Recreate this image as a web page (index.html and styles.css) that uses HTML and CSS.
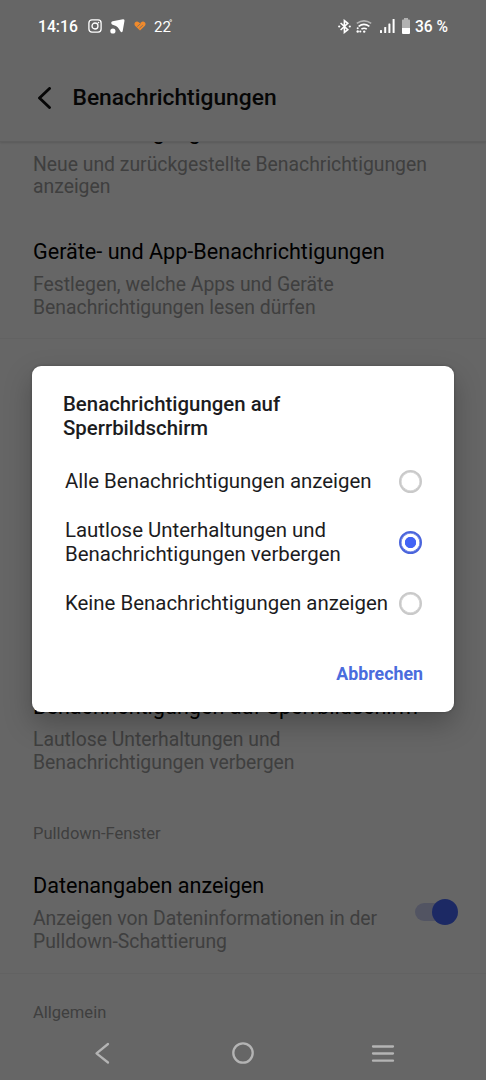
FILE: index.html
```html
<!DOCTYPE html>
<html lang="de">
<head>
<meta charset="utf-8">
<title>Benachrichtigungen</title>
<link rel="stylesheet" href="styles.css">
</head>
<body>
<div class="phone">
  <div class="screen">
    <header class="header">
      <svg class="back" width="14" height="22" viewBox="0 0 14 22"><path d="M12.500 1.500 2.500 11l10 9.500"/></svg>
      <h1 class="header-title">Benachrichtigungen</h1>
    </header>
    <main class="list">
      <section class="group group-top">
        <div class="row">
          <div class="row-title">Benachrichtigungsverlauf</div>
          <div class="row-sub">Neue und zurückgestellte Benachrichtigungen<br>anzeigen</div>
        </div>
        <div class="row">
          <div class="row-title">Geräte- und App-Benachrichtigungen</div>
          <div class="row-sub">Festlegen, welche Apps und Geräte<br>Benachrichtigungen lesen dürfen</div>
        </div>
      </section>
      <section class="group group-lock">
        <div class="row">
          <div class="row-title">Benachrichtigungen auf Sperrbildschirm</div>
          <div class="row-sub">Lautlose Unterhaltungen und<br>Benachrichtigungen verbergen</div>
        </div>
      </section>
      <section class="group group-pulldown">
        <div class="label">Pulldown-Fenster</div>
        <div class="row row-switch">
          <div>
            <div class="row-title">Datenangaben anzeigen</div>
            <div class="row-sub">Anzeigen von Dateninformationen in der<br>Pulldown-Schattierung</div>
          </div>
          <svg class="switch" width="43" height="26" viewBox="0 0 43 26"><rect class="track" y="4" width="38" height="18" rx="9"/><circle class="knob" cx="30" cy="13" r="13"/></svg>
        </div>
      </section>
      <section class="group group-general">
        <div class="label">Allgemein</div>
      </section>
    </main>
  </div>

  <div class="overlay">
    <div class="status">
      <span class="clock">14:16</span>
      <svg class="i-insta" width="14" height="14" viewBox="0 0 14 14" fill="none" stroke="#fff" stroke-width="1.300"><rect x=".9" y=".9" width="12.200" height="12.200" rx="3"/><circle cx="7" cy="7" r="3"/><circle cx="10.500" cy="3.600" r=".8" fill="#fff" stroke="none"/></svg>
      <svg class="i-send" width="15" height="15" viewBox="0 0 15 15" fill="#fff"><path d="M2.600 2.300 13 .3q1.800-.2 1.500 1.500L12.700 12q-.7 2.100-2.200.6L8.800 9.800Q7.900 7.900 6 6.900L2 5.400Q.2 3.400 2.600 2.300z"/><circle cx="2.900" cy="12" r="2.600"/></svg>
      <svg class="i-heart" width="12" height="10" viewBox="0 0 12 10"><path d="M6 9.600 1 4.800C-.9 2 2.500-.8 4.800 1.300L6 2.300l1.200-1C9.500-.8 12.900 2 11 4.800z" fill="#f08a2c"/><path d="M3.200 5.600 6.600 2.600M5.400 7.200 8.800 4.200" stroke="#666" stroke-width=".7"/></svg>
      <span class="temp">22<sup>°</sup></span>
      <span class="gap"></span>
      <svg class="i-bt" width="13" height="15" viewBox="0 0 13 15" fill="none" stroke="#fff" stroke-width="1.600"><path d="M2.600 4 9.800 10.600 6.400 13.400V1.600L9.800 4.400 2.600 11"/><g fill="#fff" stroke="none"><circle cx="1.200" cy="7.500" r="1.100"/><circle cx="11.800" cy="7.500" r="1.100"/></g></svg>
      <svg class="i-wifi" width="16" height="13" viewBox="0 0 16 13" fill="none" stroke="#fff" stroke-width="1.600"><path d="M.8 3.300Q8-1.600 15.200 3.300" opacity=".5"/><path d="M2.600 6.300q5.300-3.800 10.800 0M5.400 9.200q2.700-2 5.400 0"/><g fill="#fff" stroke="none"><circle cx="8.200" cy="11.600" r="1.200"/><circle cx="1.700" cy="8.300" r="1"/><circle cx="1.700" cy="11.500" r="1.200"/><circle cx="4.300" cy="11.500" r="1.100"/></g></svg>
      <svg class="i-sig" width="15" height="14" viewBox="0 0 15 14" fill="#fff"><rect y="11" width="2" height="3" rx=".6"/><rect x="4.200" y="8" width="2" height="6" rx=".6"/><rect x="8.400" y="4.500" width="2" height="9.500" rx=".6"/><rect x="12.600" y="0" width="2" height="14" rx=".6"/></svg>
      <svg class="i-bat" width="8" height="16" viewBox="0 0 8 16"><path d="M2 0h4v1.500h1q1 0 1 1V10H0V2.500q0-1 1-1h1z" fill="#b2b2b2"/><path d="M0 10h8v5q0 1-1 1H1q-1 0-1-1z" fill="#fff"/></svg>
      <span class="pct">36 %</span>
    </div>

    <div class="dialog">
      <h2 class="dialog-title">Benachrichtigungen auf<br>Sperrbildschirm</h2>
      <div class="options">
        <div class="option"><span>Alle Benachrichtigungen anzeigen</span><span class="radio"></span></div>
        <div class="option option-tall"><span>Lautlose Unterhaltungen und<br>Benachrichtigungen verbergen</span><span class="radio on"></span></div>
        <div class="option"><span>Keine Benachrichtigungen anzeigen</span><span class="radio"></span></div>
      </div>
      <div class="actions"><span class="cancel">Abbrechen</span></div>
    </div>

    <nav class="nav">
      <svg width="24" height="24" viewBox="0 0 24 24"><path d="M17 3 5.500 12.300 17 21.500"/></svg>
      <svg width="24" height="24" viewBox="0 0 24 24"><circle cx="12" cy="12" r="9.700"/></svg>
      <svg width="24" height="24" viewBox="0 0 24 24"><path d="M2 5.500h20M2 12.500h20M2 19.700h20"/></svg>
    </nav>
  </div>
</div>
</body>
</html>
```
FILE: styles.css
```css
* { box-sizing: border-box; margin: 0; padding: 0; }
body { font-family: Roboto, sans-serif; background: #666; }
svg { display: block; flex: none; }
.phone { position: relative; width: 486px; height: 1080px; overflow: hidden; }
.screen { width: 486px; height: 1080px; background: #fff; display: flex; flex-direction: column; overflow: hidden; }

.header { height: 142px; flex: none; display: flex; align-items: center; padding: 54px 37px 0; gap: 21.5px; border-bottom: 1px solid #ececec; box-shadow: 0 1px 2px #0002; }
.back { fill: none; stroke: #101010; stroke-width: 2.9; stroke-linecap: round; stroke-linejoin: round; }
.header-title { font-size: 22.8px; font-weight: 500; color: #111; white-space: nowrap; }

.list { flex: 1; overflow: hidden; white-space: nowrap; }
.group { padding: 0 33px; display: flex; flex-direction: column; border-bottom: 1px solid #f4f4f4; }
.group-top { height: 197px; justify-content: flex-end; padding-bottom: 19px; gap: 40.5px; }
.group-lock { height: 454px; justify-content: flex-end; padding-bottom: 19px; border: 0; }
.group-pulldown { height: 181px; padding-top: 30px; gap: 28px; }
.group-general { border: 0; padding-top: 28px; }
.row-title { font-size: 21.6px; line-height: 26px; color: #000; }
.row-sub { font-size: 19.35px; line-height: 22.5px; color: #9d9d9d; margin-top: 9px; }
.label { font-size: 16.55px; line-height: 22px; color: #9d9d9d; }
.row-switch { display: flex; align-items: center; justify-content: space-between; margin-right: -5px; }
.switch { margin-bottom: 2px; }
.track { fill: #cdd2f6; }
.knob { fill: #4668fa; }

.overlay { position: absolute; inset: 0; background: rgba(0, 0, 0, .6); display: flex; flex-direction: column; align-items: center; }
.status { width: 100%; height: 52px; display: flex; align-items: center; padding: 0 38px; color: #fff; white-space: nowrap; }
.clock { font-size: 15.7px; font-weight: 500; width: 49.5px; padding-top: 1px; }
.i-send { margin-left: 8px; }
.i-heart { margin-left: 9px; }
.temp { font-size: 15px; margin-left: 8.5px; padding-top: 1px; }
.temp sup { font-size: 9px; line-height: 0; margin-left: -2px; }
.gap { flex: 1; }
.i-wifi { margin-left: 5px; }
.i-sig { margin-left: 8px; }
.i-bat { margin: 0 5px 0 7px; }
.pct { font-size: 15.6px; font-weight: 500; padding-top: 1px; }

.dialog { width: 422px; height: 346px; margin-top: 314px; background: #fff; border-radius: 9px; box-shadow: 0 12px 28px rgba(0, 0, 0, .25), 0 0 3px rgba(0, 0, 0, .25); padding: 26px 31px 0; color: #1c1c1e; white-space: nowrap; display: flex; flex-direction: column; }
.dialog-title { font-size: 20.4px; line-height: 24px; font-weight: 500; }
.options { margin-top: 17px; padding: 0 1px 0 2px; }
.option { height: 48px; display: flex; align-items: center; justify-content: space-between; font-size: 20.42px; line-height: 24px; }
.option-tall { height: 74px; }
.radio { width: 23px; height: 23px; border: 2.5px solid #c9c9c9; border-radius: 50%; box-shadow: inset 0 0 0 .5px #c9c9c9; }
.radio.on { border-color: #4a64dc; background: radial-gradient(circle, #4263f5 5.3px, transparent 6px); box-shadow: inset 0 0 0 .5px #4a64dc; }
.actions { margin-top: 35px; text-align: right; }
.cancel { font-size: 17.8px; line-height: 24px; font-weight: 700; color: #4a6cdd; }

.nav { width: 100%; height: 54px; margin-top: auto; display: flex; justify-content: space-between; align-items: center; padding: 0 91px; }
.nav svg { fill: none; stroke: #b4b4b4; stroke-width: 2.3; stroke-linecap: round; stroke-linejoin: round; }
```
